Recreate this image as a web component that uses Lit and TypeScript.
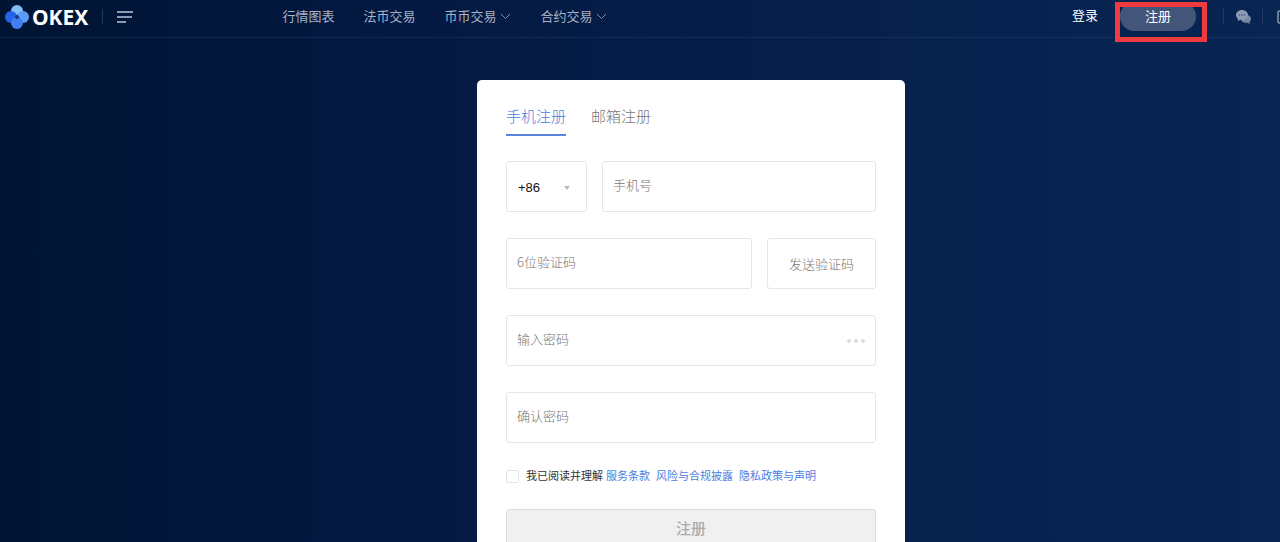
import { LitElement, html, css } from "lit";
import { customElement, state } from "lit/decorators.js";

@customElement("site-header")
class SiteHeader extends LitElement {
  static styles = css`
    :host {
      display: block;
      border-bottom: 1px solid rgba(120, 150, 200, 0.12);
      font-size: 13px;
      color: #a9b3c8;
    }
    .bar {
      display: flex;
      align-items: center;
      height: 33px;
      padding: 0 0 4px 4px;
    }
    svg {
      display: block;
      flex: none;
    }
    a {
      color: inherit;
      text-decoration: none;
      white-space: nowrap;
    }
    .logo {
      display: flex;
      align-items: center;
      gap: 2px;
      font: 700 21px/32px "Noto Sans", sans-serif;
      color: #fff;
    }
    .rule {
      width: 1px;
      height: 15px;
      margin: 0 14px;
      background: #233961;
    }
    .plain {
      display: block;
      border: 0;
      padding: 0;
      background: none;
      color: inherit;
      font: inherit;
    }
    nav {
      display: flex;
      gap: 29px;
      margin-left: 149px;
    }
    .item {
      display: flex;
      align-items: center;
      gap: 4px;
      line-height: 32px;
    }
    .account {
      display: flex;
      align-items: center;
      margin-left: auto;
      margin-right: -10px;
    }
    .login {
      color: #fff;
      line-height: 30px;
      padding-bottom: 2px;
      margin-right: 22px;
    }
    .signup {
      position: relative;
      margin-right: 13px;
    }
    .pill {
      display: block;
      width: 76px;
      height: 29px;
      border: 0;
      border-radius: 15px;
      padding: 0 0 2px;
      background: #44557a;
      color: #fff;
      font: inherit;
    }
    .highlight {
      position: absolute;
      inset: 0 -11px -11px -5px;
      border: 5px solid #f03a3e;
      pointer-events: none;
    }
    .tool {
      margin-right: -3px;
      margin-left: -2px;
    }
  `;

  private chevron() {
    return html`<svg width="11" height="7" viewBox="0 0 11 7" fill="none" stroke="#8492ae" aria-hidden="true">
      <path d="M1 1l4.500 4.500L10 1" />
    </svg>`;
  }

  render() {
    return html`
      <header class="bar">
        <a class="logo" href="#">
          <svg width="26" height="26" viewBox="0 0 26 26" aria-hidden="true">
            <circle cx="13" cy="7" r="6" fill="#84bcf8" />
            <circle cx="7" cy="13" r="6" fill="#2563ea" />
            <circle cx="19" cy="13" r="6" fill="#5b9af5" />
            <circle cx="13" cy="19" r="6" fill="#3f7ff2" />
            <path d="M13 10.500L15.500 13L13 15.500L10.500 13Z" fill="#123a8c" />
          </svg>
          <span>OKEX</span>
        </a>
        <span class="rule"></span>
        <button class="plain" aria-label="菜单">
          <svg width="16" height="12" viewBox="0 0 16 12" fill="#8d99b0">
            <path d="M0 0h16v2H0zM0 5h15v2H0zM0 10h9v2H0z" />
          </svg>
        </button>
        <nav>
          <a class="item" href="#">行情图表</a>
          <a class="item" href="#">法币交易</a>
          <a class="item" href="#">币币交易${this.chevron()}</a>
          <a class="item" href="#">合约交易${this.chevron()}</a>
        </nav>
        <div class="account">
          <a class="login" href="#">登录</a>
          <div class="signup">
            <button class="pill">注册</button>
            <span class="highlight"></span>
          </div>
          <span class="rule"></span>
          <button class="plain tool" aria-label="客服">
            <svg width="15" height="14" viewBox="0 0 15 14">
              <path d="M9 4.500c3.300 0 6 1.800 6 4.300 0 1.300-.6 2.300-1.500 3l.3 2.200-2.300-1.200c-3.500.6-6.500-1.200-6.500-4z" fill="#7786a3" />
              <path d="M6 0C2.700 0 0 2.200 0 5c0 1.500.8 2.900 2 3.800L1.700 11l2.600-1.300C8.500 10.400 12 8.200 12 5c0-2.800-2.700-5-6-5z" fill="#8d9ab4" />
              <g fill="#40537b"><circle cx="3.500" cy="5" r=".8" /><circle cx="6" cy="5" r=".8" /><circle cx="8.500" cy="5" r=".8" /></g>
            </svg>
          </button>
          <span class="rule"></span>
          <button class="plain" aria-label="下载">
            <svg width="13" height="14" viewBox="0 0 13 14" fill="none" stroke="#8d9ab4" stroke-width="1.500">
              <rect x="1" y="1" width="11" height="12" rx="1.500" />
              <path d="M3.500 7h6" />
            </svg>
          </button>
        </div>
      </header>
    `;
  }
}

@customElement("register-card")
class RegisterCard extends LitElement {
  @state() private tab = 0;

  static styles = css`
    :host {
      display: block;
    }
    * {
      box-sizing: border-box;
    }
    .card {
      width: 428px;
      max-width: 100%;
      padding: 27px 29px 60px;
      border-radius: 5px;
      background: #fff;
      font-size: 13px;
      font-weight: 300;
    }
    .tabs {
      display: flex;
      gap: 25px;
      margin-bottom: 25px;
    }
    .tab {
      height: 29px;
      border: 0;
      border-bottom: 2px solid transparent;
      padding: 0 0 7px;
      background: none;
      color: #777;
      font: inherit;
      font-size: 15px;
      line-height: 20px;
    }
    .tab.on {
      color: #4a7de0;
      border-color: #5a86de;
    }
    form {
      display: grid;
      gap: 26px;
    }
    .row {
      display: flex;
      gap: 15px;
    }
    .box {
      display: flex;
      align-items: center;
      height: 51px;
      border: 1px solid #e6e6e6;
      border-radius: 3px;
      background: #fff;
      color: #333;
      font: inherit;
    }
    .grow {
      flex: 1;
      min-width: 0;
      padding: 0 10px 3px;
    }
    .grow::placeholder {
      color: #777;
      opacity: 1;
      font-family: "Noto Sans CJK SC", sans-serif;
    }
    .code {
      position: relative;
      width: 81px;
    }
    .code select {
      appearance: none;
      width: 100%;
      height: 100%;
      border: 0;
      padding: 2px 11px 0;
      background: none;
      color: #111;
      font: 400 13px "Liberation Sans", sans-serif;
    }
    .caret {
      position: absolute;
      right: 16px;
      top: 24px;
      border: 3px solid transparent;
      border-top: 4px solid #bbb;
      border-bottom: 0;
      pointer-events: none;
    }
    .send {
      justify-content: center;
      width: 109px;
      padding: 0 0 1px;
      color: #777;
    }
    .secret {
      padding: 0 10px 0 0;
    }
    .secret input {
      flex: 1;
      min-width: 0;
      height: 100%;
      border: 0;
      background: none;
      font: inherit;
    }
    .reveal {
      display: block;
      border: 0;
      padding: 0;
      background: none;
    }
    .reveal svg {
      display: block;
    }
    .terms {
      display: flex;
      align-items: center;
      gap: 6px;
      font-size: 11px;
      line-height: 14px;
      font-weight: 400;
      color: #333;
      white-space: nowrap;
    }
    .terms label {
      margin-right: -3px;
    }
    .terms input {
      appearance: none;
      width: 13px;
      height: 13px;
      margin: 0 1px 0 0;
      border: 1px solid #e2e2e2;
      border-radius: 2px;
    }
    .terms a {
      color: #4a7de0;
      text-decoration: none;
    }
    .submit {
      justify-content: center;
      border-color: #ddd;
      background: #f0f0f0;
      color: #aaa;
      font-size: 15px;
      font-weight: 500;
      padding: 0 0 14px;
    }
  `;

  render() {
    return html`
      <section class="card">
        <div class="tabs" role="tablist">
          ${["手机注册", "邮箱注册"].map(
            (name, i) => html`<button
              class="tab ${this.tab === i ? "on" : ""}"
              role="tab"
              aria-selected=${this.tab === i}
              @click=${() => (this.tab = i)}
            >${name}</button>`
          )}
        </div>
        <form @submit=${(e: Event) => e.preventDefault()}>
          <div class="row">
            <div class="box code">
              <select aria-label="国家代码"><option>+86</option></select>
              <span class="caret"></span>
            </div>
            <input class="box grow" type="tel" placeholder="手机号" aria-label="手机号" />
          </div>
          <div class="row">
            <input class="box grow" placeholder="6位验证码" aria-label="6位验证码" />
            <button class="box send" type="button">发送验证码</button>
          </div>
          <div class="box secret">
            <input class="grow" type="password" placeholder="输入密码" aria-label="输入密码" />
            <button class="reveal" type="button" aria-label="显示密码">
              <svg width="18" height="4" viewBox="0 0 18 4" fill="#ddd">
                <circle cx="2" cy="2" r="2" /><circle cx="9" cy="2" r="2" /><circle cx="16" cy="2" r="2" />
              </svg>
            </button>
          </div>
          <div class="row">
            <input class="box grow" type="password" placeholder="确认密码" aria-label="确认密码" />
          </div>
          <div class="terms">
            <input id="agree" type="checkbox" />
            <label for="agree">我已阅读并理解</label>
            <a href="#">服务条款</a>
            <a href="#">风险与合规披露</a>
            <a href="#">隐私政策与声明</a>
          </div>
          <button class="box submit" type="submit">注册</button>
        </form>
      </section>
    `;
  }
}

@customElement("app-root")
class AppRoot extends LitElement {
  static styles = css`
    :host {
      display: block;
      height: 100vh;
      overflow: hidden;
      background: linear-gradient(90deg, #001434 0%, #041a43 36%, #06204b 65%, #082553 100%);
      font-family: "Liberation Sans", "Noto Sans CJK SC", sans-serif;
    }
    main {
      display: flex;
      justify-content: center;
      padding: 42px 0 0 102px;
    }
  `;

  render() {
    return html`
      <site-header></site-header>
      <main><register-card></register-card></main>
    `;
  }
}
